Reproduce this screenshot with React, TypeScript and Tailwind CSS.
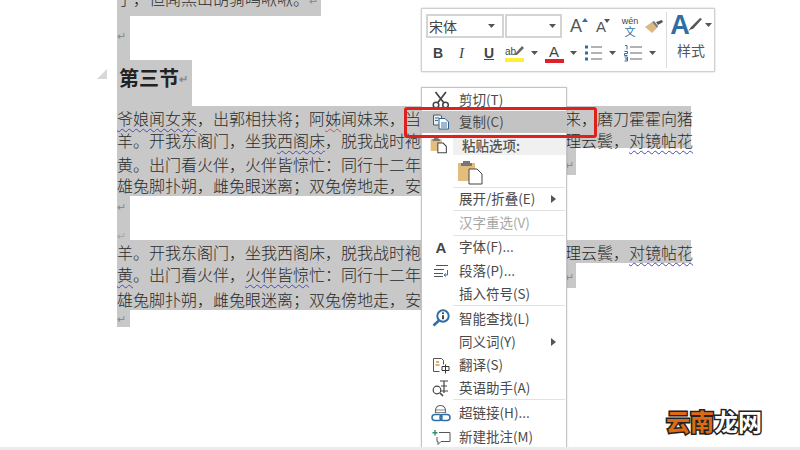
import React from "react";

const font = { fontFamily: '"Noto Sans CJK SC", "Noto Sans", sans-serif' };
const w = "underline decoration-wavy decoration-1 underline-offset-[3px] decoration-[#4a4ab8]";
const r = "underline decoration-wavy decoration-1 underline-offset-[3px] decoration-[#d84a4a]";

const Ret = () => <span className="text-[11px] text-[#8a8a8a]">↵</span>;

function Line({ h, width, children }: { h: string; width: string; children: React.ReactNode }) {
  return (
    <div className={`${h} ${width} flex items-end whitespace-nowrap bg-[#c8c8c8] text-[16px] leading-[22px] text-[#2a2a2a]`}>
      {children}
    </div>
  );
}

function Strip({ h, children }: { h: string; children: React.ReactNode }) {
  return <div className={`${h} flex w-[13px] flex-col bg-[#c8c8c8] leading-[14px]`}>{children}</div>;
}

const Line2 = () => (
  <>羊。开我东阁门，坐我<span className={w}>西阁床</span>，脱我战时袍，著我旧时裳；当窗理云鬓，<span className={w}>对镜帖花</span></>
);
const Line3 = () => (
  <><span className={w}>黄</span>。出门看火伴，<span className={w}>火伴皆惊</span>忙：同行十二年，不知木兰是女郎。<Ret /></>
);
const Line4 = () => <>雄兔脚扑朔，雌兔眼迷离；双兔傍地走，安能辨我是雄雌？<Ret /></>;

function Doc() {
  return (
    <div className="ml-[117px] flex flex-col font-light">
      <div className="h-[16px] w-[204px] overflow-hidden bg-[#c8c8c8] text-[16px] leading-[6px] whitespace-nowrap text-[#2a2a2a]">
        <span className="relative -top-[5px]">了，但闻黑山胡骑鸣啾啾。<Ret /></span>
      </div>
      <Strip h="h-[44px] pt-[12px]"><Ret /></Strip>
      <div className="flex h-[46px] w-[75px] items-center bg-[#c8c8c8] pb-[10px] pl-[2px] text-[20px] font-bold text-[#222]">
        第三节<Ret />
      </div>
      <Line h="h-[21px]" width="w-[574px]">
        <span className="relative top-[2px]">
          <span className={w}>爷娘闻女来</span>，出郭相扶将；阿<span className={r}>姊</span>闻妹来，当户理红妆；小弟闻姊来，磨刀霍霍向猪
        </span>
      </Line>
      <Line h="h-[21px]" width="w-[574px]"><span className="relative top-[3px]"><Line2 /></span></Line>
      <Line h="h-[27px]" width="w-[459px]"><Line3 /></Line>
      <Line h="h-[21px]" width="w-[420px]"><span className="relative top-[2px]"><Line4 /></span></Line>
      <Strip h="h-[44px] pt-[3px]"><Ret /><span className="mt-[13px] opacity-50"><Ret /></span></Strip>
      <Line h="h-[23px]" width="w-[574px]"><Line2 /></Line>
      <Line h="h-[25px]" width="w-[459px]"><span className="relative top-[-1px]"><Line3 /></span></Line>
      <Line h="h-[22px]" width="w-[420px]"><Line4 /></Line>
      <Strip h="h-[17px] pt-[1px]"><Ret /></Strip>
    </div>
  );
}

const Caret = ({ className = "" }: { className?: string }) => (
  <svg width="7" height="4" viewBox="0 0 7 4" className={className}><path d="M0 0h7L3.5 4z" fill="#555" /></svg>
);

const Scissors = () => (
  <svg width="18" height="18" viewBox="0 0 18 18" fill="none" stroke="#444" strokeWidth="1.5">
    <path d="M3.5 1 12 12M14 1 5.5 12" strokeWidth="1.7" />
    <circle cx="4" cy="14" r="2.8" />
    <circle cx="13.5" cy="14" r="2.8" />
  </svg>
);
const CopyIcon = () => (
  <svg width="18" height="16" viewBox="0 0 18 16" fill="none">
    <path d="M1.5 1h7l1 1v9h-8z" fill="#eee" stroke="#4a5a70" />
    <path d="M7 4.500h6l3.500 3.500v7H7z" fill="#fff" stroke="#2d5f8f" />
    <path d="M3 4h4M3 6.500h3M9 9h6M9 11h6M9 13h6" stroke="#3f6f9f" />
  </svg>
);
const PasteIcon = ({ big }: { big?: boolean }) => (
  <svg width={big ? 26 : 17} height={big ? 26 : 20} viewBox="0 0 26 26" fill="none">
    <path d="M1 4h17v18H1z" fill="#e3bd7c" />
    <path d="M6 4V2h7v2h2v3H4V4z" fill="#777" />
    <path d="M12 10h8l5 5v10H12z" fill="#fff" stroke="#444" strokeWidth={big ? 1 : 1.6} />
  </svg>
);
const FontA = () => <span className="text-[15px] font-bold leading-none text-[#444]" style={{ fontFamily: "Liberation Sans" }}>A</span>;
const ParaIcon = () => (
  <svg width="16" height="14" viewBox="0 0 16 14" fill="none" stroke="#555">
    <path d="M3 1.500h12M1 5.500h10M1 9.500h9M1 12.500h9" />
    <path d="M14.500 6v5h-3M13 9.500 11 11l2 1.500" stroke="#3d6f9f" />
  </svg>
);
const SmartIcon = () => (
  <svg width="19" height="18" viewBox="0 0 19 18" fill="none">
    <circle cx="11" cy="7" r="5.700" fill="#fff" stroke="#2f6ea5" strokeWidth="2" />
    <path d="M7 11.500 1.500 16.500" stroke="#2f6ea5" strokeWidth="2.600" />
    <circle cx="11" cy="4.300" r="1" fill="#333" />
    <path d="M11 6.300v4" stroke="#333" strokeWidth="1.800" />
  </svg>
);
const TransIcon = () => (
  <svg width="19" height="17" viewBox="0 0 19 17" fill="none" stroke="#555">
    <path d="M1.500 1.500h8l2 2v4M1.500 1.500v13h6" />
    <path d="M4 5h3M3.500 8h4" stroke="#d09a50" strokeWidth="1.500" />
    <path d="M10 9.500h7v4h-7zM13.500 7.500v9" stroke="#333" />
  </svg>
);
const EngIcon = () => (
  <svg width="20" height="18" viewBox="0 0 20 18" fill="none" stroke="#444" strokeWidth="1.200">
    <circle cx="6" cy="11" r="3.800" />
    <path d="M9 14l3 3" strokeWidth="1.600" />
    <path d="M9 2h8M13 2v12M10 7h6M10 12h7" />
  </svg>
);
const LinkIcon = () => (
  <svg width="20" height="18" viewBox="0 0 20 18" fill="none">
    <path d="M4.500 9V6a5 4.500 0 0 1 10 0v3" stroke="#666" strokeWidth="1.100" />
    <path d="M4 6h11M4 8.500h11" stroke="#666" strokeWidth=".8" />
    <rect x="1" y="10.500" width="10" height="6" rx="3" stroke="#2d6ea8" strokeWidth="1.500" />
    <rect x="9" y="10.500" width="10" height="6" rx="3" stroke="#2d6ea8" strokeWidth="1.500" />
  </svg>
);
const NoteIcon = () => (
  <svg width="19" height="17" viewBox="0 0 19 17" fill="none">
    <path d="M7 3.500h11v9H9l-3 3v-3H5V8" stroke="#555" />
    <path d="M3 1v5.500M.5 3.700h5" stroke="#2f8f6f" strokeWidth="1.400" />
  </svg>
);

function Item({ icon, label, arrow, disabled, cls }: { icon?: React.ReactNode; label: string; arrow?: boolean; disabled?: boolean; cls: string }) {
  return (
    <div className={`${cls} flex items-center`}>
      <div className="flex w-[37px] shrink-0 justify-center pl-px">{icon}</div>
      <span className={`flex-1 text-[13.500px] leading-none whitespace-nowrap ${disabled ? "text-[#a6a6a6]" : "text-[#4a4a4a]"}`}>{label}</span>
      {arrow && <div className="mr-[10px] h-0 w-0 border-y-[4px] border-l-[5px] border-y-transparent border-l-[#555]" />}
    </div>
  );
}

const Sep = () => <div className="ml-[31px] mr-px h-px bg-[#e2e2e2]" />;

function Menu() {
  return (
    <div className="absolute left-[421px] top-[87px] flex h-[362px] w-[146px] flex-col border border-[#c4c4c4] bg-white pt-[1px] shadow-[0_0_2px_rgba(0,0,0,.15)]" style={font}>
      <Item icon={<Scissors />} label="剪切(T)" cls="h-[22px]" />
      <div className="bg-[#c3c3c3]"><Item icon={<CopyIcon />} label="复制(C)" cls="h-[22px]" /></div>
      <div className="flex h-[24px] items-center">
        <div className="flex w-[31px] shrink-0 justify-center pl-[2px]"><PasteIcon /></div>
        <div className="flex h-[21px] flex-1 items-center bg-[#f0f0f0] pl-[9px] text-[13.500px] font-medium text-[#555]">粘贴选项:</div>
      </div>
      <div className="flex h-[30px] items-center pl-[35px]"><PasteIcon big /></div>
      <Sep />
      <Item label="展开/折叠(E)" arrow cls="h-[22px]" />
      <Sep />
      <Item label="汉字重选(V)" disabled cls="h-[24px]" />
      <Sep />
      <Item icon={<FontA />} label="字体(F)..." cls="h-[23px]" />
      <Item icon={<ParaIcon />} label="段落(P)..." cls="h-[24px]" />
      <Item label="插入符号(S)" cls="h-[23px]" />
      <Sep />
      <Item icon={<SmartIcon />} label="智能查找(L)" cls="h-[24px]" />
      <Item label="同义词(Y)" arrow cls="h-[23px]" />
      <Item icon={<TransIcon />} label="翻译(S)" cls="h-[24px]" />
      <Item icon={<EngIcon />} label="英语助手(A)" cls="h-[22px]" />
      <Sep />
      <Item icon={<LinkIcon />} label="超链接(H)..." cls="h-[26px]" />
      <Item icon={<NoteIcon />} label="新建批注(M)" cls="h-[22px]" />
    </div>
  );
}

const Sans = { fontFamily: '"Liberation Sans", sans-serif' };

const Bullets = () => (
  <svg width="17" height="18" viewBox="0 0 17 18">
    <path d="M0 1.500h3v3H0zM0 7.500h3v3H0zM0 13.500h3v3H0z" fill="#2f6ea5" />
    <path d="M6 3h11M6 9h11M6 15h11" stroke="#666" strokeWidth="1.200" />
  </svg>
);
const Numbers = () => (
  <svg width="18" height="18" viewBox="0 0 18 18">
    <path d="M1 1.500h2v4M.5 7.500h3v2h-3v2h3M.5 13h3v2h-2 2v2h-3" stroke="#2f6ea5" fill="none" />
    <path d="M6 3h12M6 9h12M6 15h12" stroke="#666" strokeWidth="1.200" />
  </svg>
);
const Brush = () => (
  <svg width="19" height="15" viewBox="0 0 19 15">
    <path d="M0 8 7 3l5 6-5 5z" fill="#dfb880" />
    <path d="M7 3l2-1 4 5-1 2z" fill="#777" />
    <path d="M11 3l6-2 1 2-5 3z" fill="#555" />
  </svg>
);

function Toolbar() {
  return (
    <div className="absolute left-[421px] top-[8px] flex h-[64px] w-[294px] border border-[#cfcfcf] bg-white pl-[4px] shadow-[0_0_2px_rgba(0,0,0,.2)]" style={font}>
      <div className="flex w-[239px] flex-col">
        <div className="mt-[5px] flex h-[24px] items-center">
          <div className="flex h-[24px] w-[78px] items-center justify-between border-2 border-[#d4d4d4] px-[1px] pr-[7px] text-[14px] text-[#444]">宋体<Caret /></div>
          <div className="ml-px flex h-[24px] w-[57px] items-center justify-end border-2 border-[#d4d4d4] pr-[4px]"><Caret /></div>
          <div className="ml-[8px] flex w-[18px] items-start text-[18px] leading-none text-[#555]" style={Sans}>A<svg width="6" height="4" viewBox="0 0 6 4" className="mt-px"><path d="M3 0l3 4H0z" fill="#2f6ea5" /></svg></div>
          <div className="ml-[8px] flex w-[18px] items-start text-[15px] leading-none text-[#555]" style={Sans}>A<svg width="6" height="4" viewBox="0 0 6 4" className="-ml-[2px]"><path d="M0 0h6L3 4z" fill="#555" /></svg></div>
          <div className="ml-[5px] flex w-[22px] flex-col items-center text-[9px] leading-[10px] text-[#444]" style={Sans}>wén<span className="text-[11px] leading-[10px] text-[#2f6ea5]" style={font}>文</span></div>
          <div className="ml-[4px]"><Brush /></div>
        </div>
        <div className="mt-[3px] flex h-[24px] items-center text-[#444]">
          <span className="ml-[7px] w-[26px] text-[14px] font-bold" style={Sans}>B</span>
          <span className="w-[25px] text-[15px] italic" style={{ fontFamily: '"Liberation Serif", serif' }}>I</span>
          <span className="w-[21px] text-[14px] font-bold underline" style={Sans}>U</span>
          <div className="relative flex w-[19px] flex-col items-center">
            <span className="text-[10px] leading-[13px] self-start" style={Sans}>ab</span>
            <svg width="11" height="11" viewBox="0 0 11 11" className="absolute right-0 top-0"><path d="M1 10 9 1l2 2-7 7z" fill="#666" /></svg>
            <div className="h-[4px] w-[19px] bg-[#ffee33]" />
          </div>
          <Caret className="ml-[6.500px] mr-[6.500px]" />
          <div className="flex w-[20px] flex-col items-center">
            <span className="text-[15px] leading-[15px]" style={Sans}>A</span>
            <div className="h-[4px] w-[19px] bg-[#e01f26]" />
          </div>
          <Caret className="ml-[5.500px] mr-[8.500px]" />
          <Bullets />
          <Caret className="ml-[7px] mr-[8px]" />
          <Numbers />
          <Caret className="ml-[6.500px]" />
        </div>
      </div>
      <div className="my-[3px] ml-[1px] w-px bg-[#dcdcdc]" />
      <div className="flex flex-1 flex-col items-center pl-[1px]">
        <div className="mt-[3px] flex h-[26px] items-center">
          <span className="text-[27px] font-bold leading-none text-[#2f6ea5]" style={Sans}>A</span>
          <svg width="16" height="18" viewBox="0 0 16 18" className="-ml-[2px]"><path d="M0 16c2-3 4-3 5-3l9-10-2-1-9 9c-1 1-2 3-3 5z" fill="#555" /></svg>
          <Caret className="ml-[1px]" />
        </div>
        <div className="mt-[2px] text-[14px] leading-[20px] text-[#555]">样式</div>
      </div>
    </div>
  );
}

export default function App() {
  return (
    <div className="relative h-[450px] w-[800px] overflow-hidden bg-white" style={font}>
      <Doc />
      <div className="absolute left-[97px] top-[69px] h-0 w-0 border-b-[10px] border-l-[10px] border-b-[#d8d8d8] border-l-transparent" />
      <Menu />
      <Toolbar />
      <div className="absolute left-[404px] top-[107px] h-[31px] w-[193px] rounded-[3px] border-[3px] border-[#e0201c]" />
      <div className="absolute left-[666px] top-[406px] text-[24px] font-bold leading-[30px] [-webkit-text-stroke:3px_#222] [paint-order:stroke_fill]">
        <span className="text-[#e06a14]">云南</span><span className="text-white">龙网</span>
      </div>
      <div className="absolute bottom-0 left-0 h-[3px] w-full bg-[#ececec]" />
    </div>
  );
}
